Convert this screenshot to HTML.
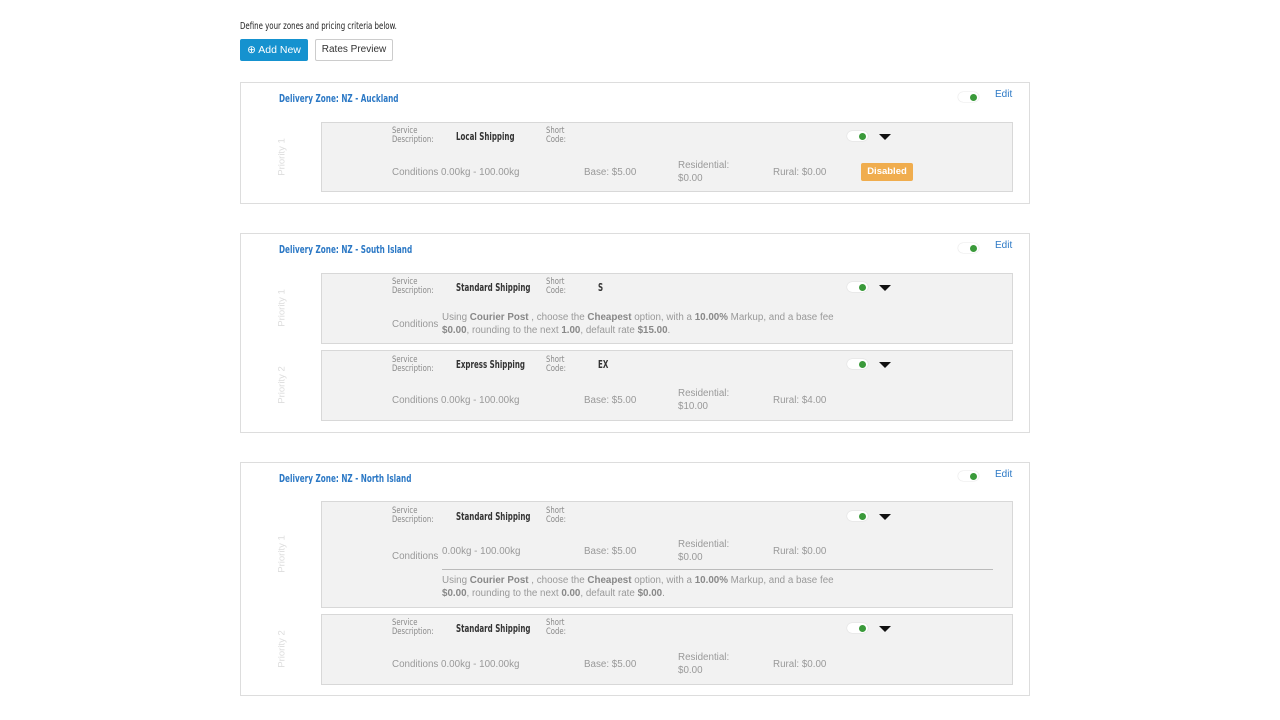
<!DOCTYPE html>
<html><head><meta charset="utf-8"><style>
*{margin:0;padding:0;box-sizing:border-box}
body{width:1280px;height:720px;background:#fff;position:relative;overflow:hidden;font-family:"Liberation Sans",sans-serif}
.a{position:absolute;white-space:nowrap}
.n{font-family:"Liberation Sans Narrow","DejaVu Sans Condensed","Liberation Sans",sans-serif;font-stretch:condensed}
.box{position:absolute;border:1px solid #ddd;background:#fff}
.row{position:absolute;left:321px;width:692px;border:1px solid #d8d8d8;background:#f2f2f2}
.title{font-size:10.5px;font-weight:bold;color:#2b78c5;transform:scaleX(.77);transform-origin:left}
.lbl{font-size:9px;color:#888;line-height:9px;transform:scaleX(.85);transform-origin:left}
.nm{font-size:10.5px;font-weight:bold;color:#333;transform:scaleX(.75);transform-origin:left}
.t{font-size:9.8px;color:#999;line-height:13px}
.t b{color:#888}
.tg{position:absolute;width:21px;height:10px;border-radius:5px;background:#fff;box-shadow:0 0 1px #bbb}
.tg:after{content:"";position:absolute;right:2px;top:1.5px;width:7px;height:7px;border-radius:50%;background:#3a9a3a}
.car{position:absolute;width:0;height:0;border-left:6px solid transparent;border-right:6px solid transparent;border-top:6px solid #111}
.pr{position:absolute;font-size:9.5px;color:#ddd;transform:translate(-50%,-50%) rotate(-90deg);white-space:nowrap}
.edit{font-size:10px;color:#2b78c5}
</style></head><body>
<div class="a n" style="left:240px;top:21px;font-size:10px;color:#222;transform:scaleX(.78);transform-origin:left">Define your zones and pricing criteria below.</div>
<div class="a" style="left:240px;top:39px;width:68px;height:22px;background:#1592cf;border-radius:2px;color:#fff;font-size:10.5px;line-height:22px;text-align:center">&#x2295; Add New</div>
<div class="a" style="left:315px;top:39px;width:78px;height:22px;border:1px solid #ccc;border-radius:2px;color:#333;font-size:10px;line-height:20px;text-align:center">Rates Preview</div>

<!-- Zone 1 -->
<div class="box" style="left:240px;top:82px;width:790px;height:122px"></div>
<div class="a n title" style="left:279px;top:93px">Delivery Zone: NZ - Auckland</div>
<div class="tg" style="left:958px;top:92px"></div>
<div class="a edit" style="left:995px;top:89px">Edit</div>
<div class="row" style="top:122px;height:70px"></div>
<div class="pr" style="left:282px;top:157px">Priority 1</div>
<div class="a n lbl" style="left:392px;top:127px">Service<br>Description:</div>
<div class="a n nm" style="left:456px;top:131px">Local Shipping</div>
<div class="a n lbl" style="left:546px;top:127px">Short<br>Code:</div>
<div class="tg" style="left:847px;top:131px"></div>
<div class="car" style="left:879px;top:134px"></div>
<div class="a t" style="left:392px;top:166px">Conditions 0.00kg - 100.00kg</div>
<div class="a t" style="left:584px;top:166px">Base: $5.00</div>
<div class="a t" style="left:678px;top:159px">Residential:<br>$0.00</div>
<div class="a t" style="left:773px;top:166px">Rural: $0.00</div>
<div class="a" style="left:861px;top:163px;width:52px;height:18px;background:#f0ad4e;border-radius:2px;color:#fff;font-size:9.5px;font-weight:bold;line-height:18px;text-align:center">Disabled</div>

<!-- Zone 2 -->
<div class="box" style="left:240px;top:233px;width:790px;height:200px"></div>
<div class="a n title" style="left:279px;top:244px">Delivery Zone: NZ - South Island</div>
<div class="tg" style="left:958px;top:243px"></div>
<div class="a edit" style="left:995px;top:240px">Edit</div>
<div class="row" style="top:273px;height:71px"></div>
<div class="pr" style="left:282px;top:308px">Priority 1</div>
<div class="a n lbl" style="left:392px;top:278px">Service<br>Description:</div>
<div class="a n nm" style="left:456px;top:282px">Standard Shipping</div>
<div class="a n lbl" style="left:546px;top:278px">Short<br>Code:</div>
<div class="a n nm" style="left:598px;top:282px">S</div>
<div class="tg" style="left:847px;top:282px"></div>
<div class="car" style="left:879px;top:285px"></div>
<div class="a t" style="left:392px;top:318px">Conditions</div>
<div class="a t" style="left:442px;top:311px">Using <b>Courier Post</b> , choose the <b>Cheapest</b> option, with a <b>10.00%</b> Markup, and a base fee<br><b>$0.00</b>, rounding to the next <b>1.00</b>, default rate <b>$15.00</b>.</div>
<div class="row" style="top:350px;height:71px"></div>
<div class="pr" style="left:282px;top:385px">Priority 2</div>
<div class="a n lbl" style="left:392px;top:356px">Service<br>Description:</div>
<div class="a n nm" style="left:456px;top:359px">Express Shipping</div>
<div class="a n lbl" style="left:546px;top:356px">Short<br>Code:</div>
<div class="a n nm" style="left:598px;top:359px">EX</div>
<div class="tg" style="left:847px;top:359px"></div>
<div class="car" style="left:879px;top:362px"></div>
<div class="a t" style="left:392px;top:394px">Conditions 0.00kg - 100.00kg</div>
<div class="a t" style="left:584px;top:394px">Base: $5.00</div>
<div class="a t" style="left:678px;top:387px">Residential:<br>$10.00</div>
<div class="a t" style="left:773px;top:394px">Rural: $4.00</div>

<!-- Zone 3 -->
<div class="box" style="left:240px;top:462px;width:790px;height:234px"></div>
<div class="a n title" style="left:279px;top:473px">Delivery Zone: NZ - North Island</div>
<div class="tg" style="left:958px;top:471px"></div>
<div class="a edit" style="left:995px;top:469px">Edit</div>
<div class="row" style="top:501px;height:107px"></div>
<div class="pr" style="left:282px;top:554px">Priority 1</div>
<div class="a n lbl" style="left:392px;top:507px">Service<br>Description:</div>
<div class="a n nm" style="left:456px;top:511px">Standard Shipping</div>
<div class="a n lbl" style="left:546px;top:507px">Short<br>Code:</div>
<div class="tg" style="left:847px;top:511px"></div>
<div class="car" style="left:879px;top:514px"></div>
<div class="a t" style="left:392px;top:550px">Conditions</div>
<div class="a t" style="left:442px;top:545px">0.00kg - 100.00kg</div>
<div class="a t" style="left:584px;top:545px">Base: $5.00</div>
<div class="a t" style="left:678px;top:538px">Residential:<br>$0.00</div>
<div class="a t" style="left:773px;top:545px">Rural: $0.00</div>
<div class="a" style="left:442px;top:569px;width:551px;height:1px;background:#bbb"></div>
<div class="a t" style="left:442px;top:574px">Using <b>Courier Post</b> , choose the <b>Cheapest</b> option, with a <b>10.00%</b> Markup, and a base fee<br><b>$0.00</b>, rounding to the next <b>0.00</b>, default rate <b>$0.00</b>.</div>
<div class="row" style="top:614px;height:71px"></div>
<div class="pr" style="left:282px;top:649px">Priority 2</div>
<div class="a n lbl" style="left:392px;top:619px">Service<br>Description:</div>
<div class="a n nm" style="left:456px;top:623px">Standard Shipping</div>
<div class="a n lbl" style="left:546px;top:619px">Short<br>Code:</div>
<div class="tg" style="left:847px;top:623px"></div>
<div class="car" style="left:879px;top:626px"></div>
<div class="a t" style="left:392px;top:658px">Conditions 0.00kg - 100.00kg</div>
<div class="a t" style="left:584px;top:658px">Base: $5.00</div>
<div class="a t" style="left:678px;top:651px">Residential:<br>$0.00</div>
<div class="a t" style="left:773px;top:658px">Rural: $0.00</div>
</body></html>
